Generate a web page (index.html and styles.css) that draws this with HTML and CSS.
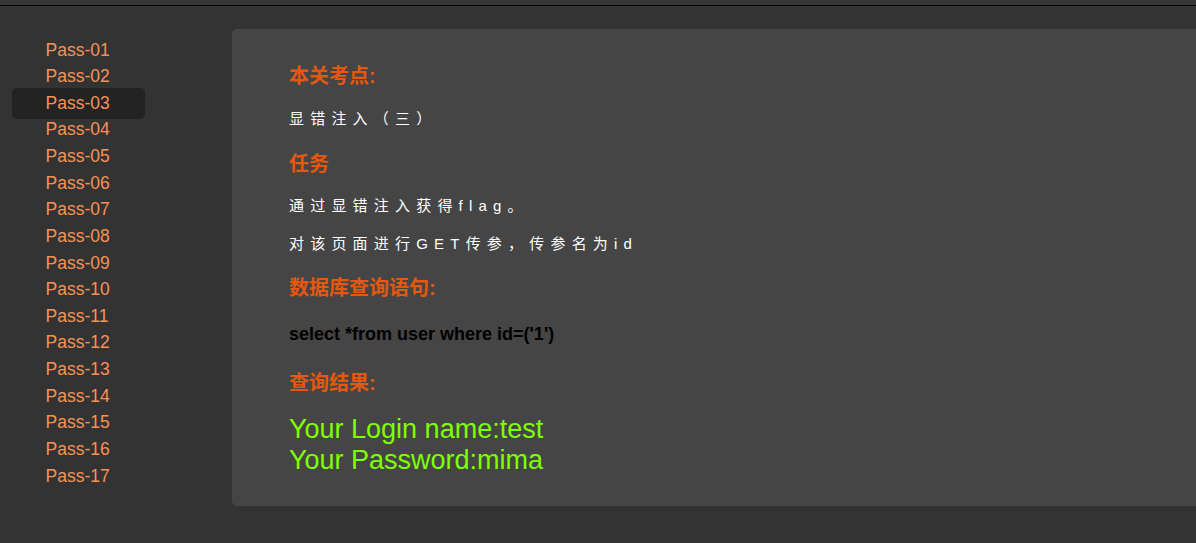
FILE: index.html
```html
<!DOCTYPE html>
<html lang="zh">
<head>
<meta charset="utf-8">
<title>Pass-03</title>
<link rel="stylesheet" href="styles.css">
</head>
<body>
<div class="topbar"></div>
<div class="layout">
  <ul class="nav">
    <li class="nav-item">Pass-01</li>
    <li class="nav-item">Pass-02</li>
    <li class="nav-item active">Pass-03</li>
    <li class="nav-item">Pass-04</li>
    <li class="nav-item">Pass-05</li>
    <li class="nav-item">Pass-06</li>
    <li class="nav-item">Pass-07</li>
    <li class="nav-item">Pass-08</li>
    <li class="nav-item">Pass-09</li>
    <li class="nav-item">Pass-10</li>
    <li class="nav-item">Pass-11</li>
    <li class="nav-item">Pass-12</li>
    <li class="nav-item">Pass-13</li>
    <li class="nav-item">Pass-14</li>
    <li class="nav-item">Pass-15</li>
    <li class="nav-item">Pass-16</li>
    <li class="nav-item">Pass-17</li>
  </ul>
  <main class="panel">
    <h3 class="title t1">本关考点:</h3>
    <p class="desc d1">显错注入（三）</p>
    <h3 class="title t2">任务</h3>
    <p class="desc d2">通过显错注入获得flag。</p>
    <p class="desc d3">对该页面进行GET传参，传参名为id</p>
    <h3 class="title t3">数据库查询语句:</h3>
    <p class="sql">select *from user where id=('1')</p>
    <h3 class="title t4">查询结果:</h3>
    <div class="result">Your Login name:test<br>Your Password:mima</div>
  </main>
</div>
</body>
</html>
```

FILE: styles.css
```css
html, body {
  margin: 0;
  padding: 0;
  background: #333333;
  font-family: "Liberation Sans", Arial, "Noto Sans CJK SC", sans-serif;
}
.topbar {
  height: 5px;
  background: #363636;
  border-bottom: 1px solid #000;
}
.layout {
  display: flex;
  align-items: flex-start;
  padding-top: 23px;
  padding-bottom: 37px;
}
.nav {
  list-style: none;
  margin: 7.5px 0 0 12px;
  padding: 0;
  width: 133px;
  flex: none;
}
.nav-item {
  font-size: 17.5px;
  line-height: 26.63px;
  height: 26.63px;
  padding-left: 33.5px;
  color: #f79254;
}
.nav-item.active {
  background: #232323;
  border-radius: 5px;
  padding-top: 2.2px;
  padding-bottom: 2.2px;
  margin: -2.2px 0;
}
.panel {
  margin-left: 87px;
  flex: 1;
  background: #454545;
  border-radius: 5px 0 0 5px;
  padding: 34px 0 30px 57px;
}
.title {
  margin: 0;
  font-size: 20px;
  line-height: 26px;
  font-weight: bold;
  color: #e5580e;
}
.desc {
  margin: 0;
  font-size: 15px;
  line-height: 20px;
  color: #ffffff;
  letter-spacing: 6.2px;
}
.d1 { margin-top: 20px; }
.t2 { margin-top: 22px; }
.d2 { margin-top: 19px; }
.d3 { margin-top: 18px; }
.t3 { margin-top: 21px; }
.sql {
  margin: 22px 0 0;
  font-size: 18px;
  line-height: 22px;
  font-weight: bold;
  color: #000000;
}
.t4 { margin-top: 25px; }
.result {
  margin-top: 17.5px;
  font-size: 27px;
  line-height: 31px;
  color: #7fff00;
}
```
